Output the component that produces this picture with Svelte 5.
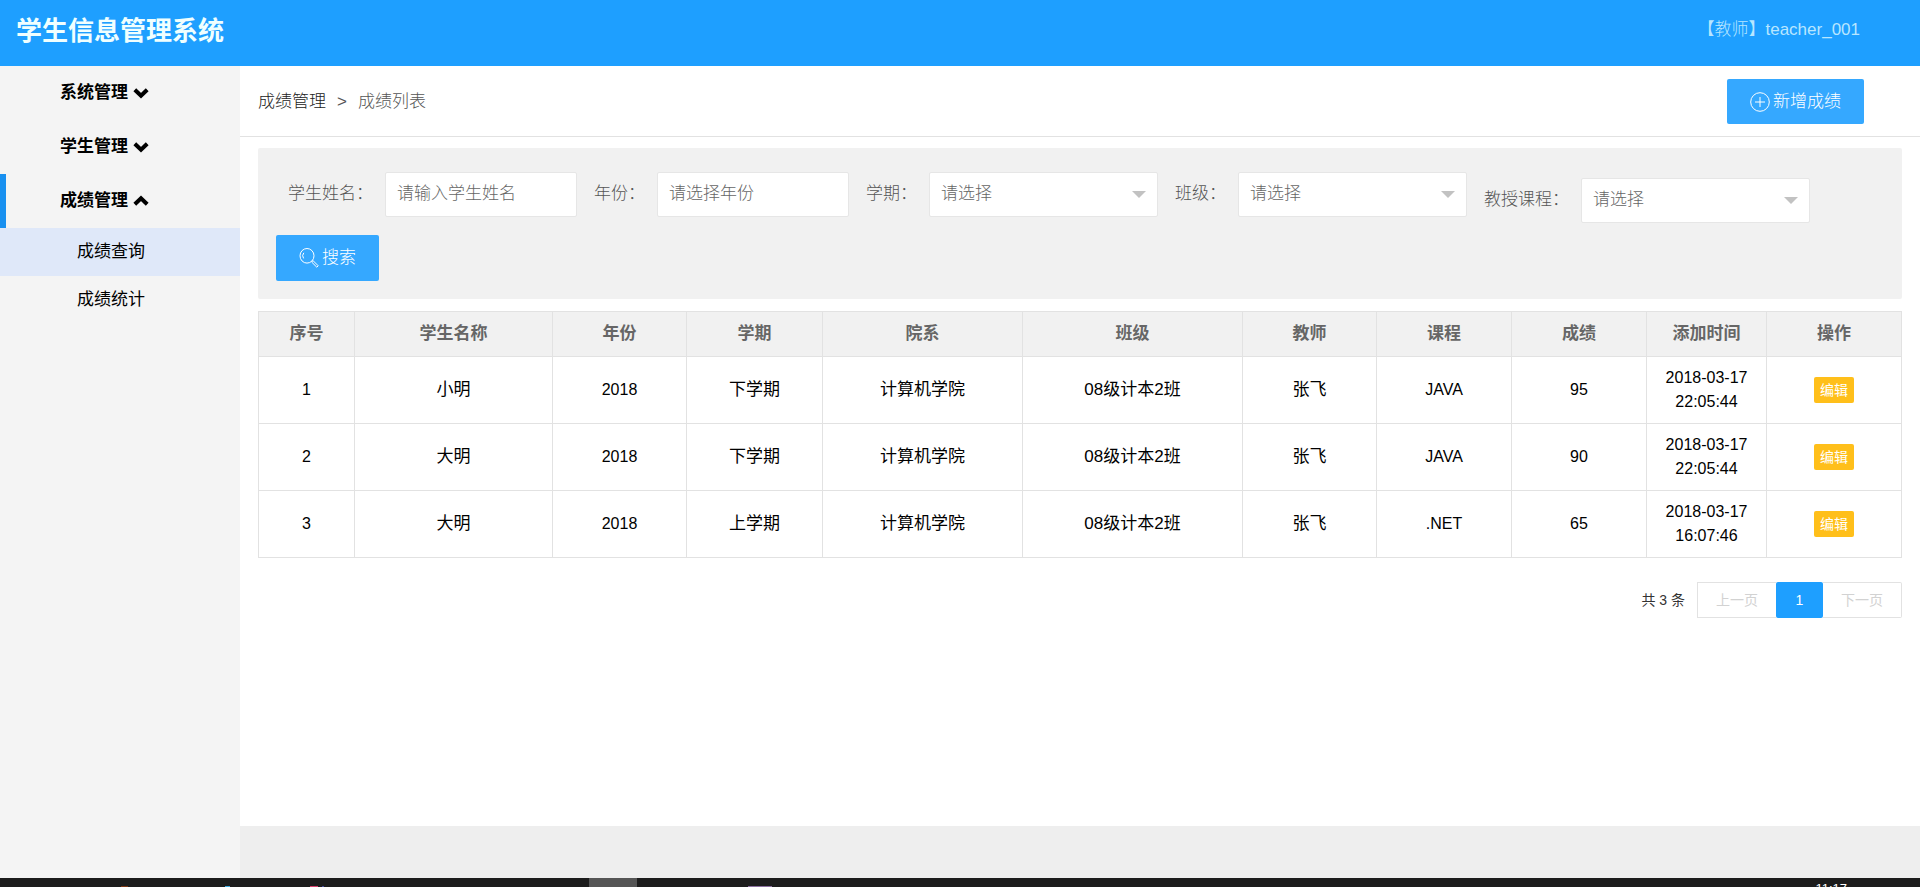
<script lang="ts">
	type Nota = {
		id: number;
		alumno: string;
		anio: string;
		semestre: string;
		facultad: string;
		clase: string;
		profesor: string;
		curso: string;
		puntaje: number;
		fecha: string;
		hora: string;
	}

	type Menu = {
		titulo: string;
		hijos: string[];
	}

	const menus: Menu[] = [
		{ titulo: "系统管理", hijos: [] },
		{ titulo: "学生管理", hijos: [] },
		{ titulo: "成绩管理", hijos: ["成绩查询", "成绩统计"] },
	];

	const columnas = [
		{ nombre: "序号", ancho: 96 },
		{ nombre: "学生名称", ancho: 198 },
		{ nombre: "年份", ancho: 134 },
		{ nombre: "学期", ancho: 136 },
		{ nombre: "院系", ancho: 200 },
		{ nombre: "班级", ancho: 220 },
		{ nombre: "教师", ancho: 134 },
		{ nombre: "课程", ancho: 135 },
		{ nombre: "成绩", ancho: 135 },
		{ nombre: "添加时间", ancho: 120 },
		{ nombre: "操作", ancho: 135 },
	];
	const anchoTotal = columnas.reduce((suma, c) => suma + c.ancho, 0);

	const notas: Nota[] = [
		{ id: 1, alumno: "小明", anio: "2018", semestre: "下学期", facultad: "计算机学院", clase: "08级计本2班", profesor: "张飞", curso: "JAVA", puntaje: 95, fecha: "2018-03-17", hora: "22:05:44" },
		{ id: 2, alumno: "大明", anio: "2018", semestre: "下学期", facultad: "计算机学院", clase: "08级计本2班", profesor: "张飞", curso: "JAVA", puntaje: 90, fecha: "2018-03-17", hora: "22:05:44" },
		{ id: 3, alumno: "大明", anio: "2018", semestre: "上学期", facultad: "计算机学院", clase: "08级计本2班", profesor: "张飞", curso: ".NET", puntaje: 65, fecha: "2018-03-17", hora: "16:07:46" },
	];

	let abierto = $state("成绩管理");
	let activo = $state("成绩查询");

	function alternar(titulo: string): void {
		abierto = abierto === titulo ? "" : titulo;
	}
</script>

<div class="pantalla">
	<header class="cabecera">
		<h1>学生信息管理系统</h1>
		<a href="#usuario" class="usuario">【教师】teacher_001</a>
	</header>

	<div class="cuerpo">
		<!-- MENU LATERAL -->
		<nav class="lateral">
			{#each menus as m (m.titulo)}
				<button class="menu" class:abierto={abierto === m.titulo} onclick={() => alternar(m.titulo)}>
					{m.titulo}
					<svg class="flecha" viewBox="0 0 16 12" aria-hidden="true">
						<path d="M1.8 2.8 L8 8.8 L14.2 2.8" />
					</svg>
				</button>
				{#if abierto === m.titulo}
					{#each m.hijos as h (h)}
						<a href="#{h}" class="submenu" class:activo={activo === h} onclick={() => (activo = h)}>{h}</a>
					{/each}
				{/if}
			{/each}
		</nav>

		<div class="principal">
			<div class="barra">
				<div class="ruta">
					<a href="#notas">成绩管理</a>
					<span>&gt;</span>
					<span>成绩列表</span>
				</div>
				<button class="btn btn-nuevo">
					<svg class="icono" viewBox="0 0 20 20" aria-hidden="true">
						<circle cx="10" cy="10" r="9.3" />
						<path d="M10 5v10M5 10h10" />
					</svg>
					新增成绩
				</button>
			</div>

			<div class="contenido">
				<!-- FILTROS -->
				<form class="filtros" onsubmit={(e) => e.preventDefault()}>
					<div class="campos">
						<div class="campo">
							<label for="alumno">学生姓名：</label>
							<input id="alumno" type="text" placeholder="请输入学生姓名" />
						</div>
						<div class="campo">
							<label for="anio">年份：</label>
							<input id="anio" type="text" placeholder="请选择年份" />
						</div>
						<div class="campo">
							<label for="semestre">学期：</label>
							<div class="selector">
								<select id="semestre"><option>请选择</option></select>
							</div>
						</div>
						<div class="campo">
							<label for="clase">班级：</label>
							<div class="selector">
								<select id="clase"><option>请选择</option></select>
							</div>
						</div>
						<div class="campo campo-curso">
							<label for="curso">教授课程：</label>
							<div class="selector">
								<select id="curso"><option>请选择</option></select>
							</div>
						</div>
					</div>
					<button class="btn btn-buscar">
						<svg class="icono" viewBox="0 0 20 20" aria-hidden="true">
							<ellipse cx="8" cy="7.8" rx="7" ry="7.3" />
							<path d="M4.6 10.4 A4.6 4.6 0 0 1 4.8 4.8" />
							<path d="M12.6 14 L14 12.6 L19.2 17.8 L17.8 19.2 Z" />
						</svg>
						搜索
					</button>
				</form>

				<!-- TABLA DE NOTAS -->
				<table>
					<colgroup>
						{#each columnas as c (c.nombre)}
							<col style="width: {(c.ancho / anchoTotal) * 100}%" />
						{/each}
					</colgroup>
					<thead>
						<tr>
							{#each columnas as c (c.nombre)}
								<th>{c.nombre}</th>
							{/each}
						</tr>
					</thead>
					<tbody>
						{#each notas as n (n.id)}
							<tr>
								<td class="latino">{n.id}</td>
								<td>{n.alumno}</td>
								<td class="latino">{n.anio}</td>
								<td>{n.semestre}</td>
								<td>{n.facultad}</td>
								<td>{n.clase}</td>
								<td>{n.profesor}</td>
								<td class="latino">{n.curso}</td>
								<td class="latino">{n.puntaje}</td>
								<td class="latino">{n.fecha}<br />{n.hora}</td>
								<td><button class="btn-editar">编辑</button></td>
							</tr>
						{/each}
					</tbody>
				</table>

				<!-- PAGINACION -->
				<div class="paginas">
					<span class="total">共 {notas.length} 条</span>
					<button class="pagina" disabled>上一页</button>
					<button class="pagina actual">1</button>
					<button class="pagina" disabled>下一页</button>
				</div>
			</div>

			<footer class="pie"></footer>
		</div>
	</div>

	<!-- BARRA DE TAREAS: solo asoma el borde superior -->
	<div class="tareas">
		<svg class="programas" viewBox="0 0 800 9" aria-hidden="true">
			<rect x="589" y="0" width="48" height="9" fill="#555" />
			<rect x="121" y="8" width="7" height="1" fill="#7a3412" />
			<rect x="225" y="8" width="5" height="1" fill="#3fa9dc" />
			<rect x="310" y="8" width="8" height="1" fill="#d8406c" />
			<rect x="322" y="8" width="2" height="1" fill="#44489a" />
			<rect x="748" y="8" width="24" height="1" fill="#8a6f9e" />
		</svg>
		<span class="reloj">11:17</span>
	</div>
</div>

<style>
	:global(body) {
		margin: 0;
	}

	.pantalla {
		display: flex;
		flex-direction: column;
		height: 100vh;
		overflow: hidden;
		background: #fff;
		color: #000;
		font-family: "Liberation Sans", "Noto Sans CJK SC", sans-serif;
		font-size: 17px;
		font-weight: 300;
		line-height: 24px;
	}

	button, input, select {
		font: inherit;
		box-sizing: border-box;
	}
	a {
		color: inherit;
		text-decoration: none;
	}

	/* 1. CABECERA */
	.cabecera {
		display: flex;
		flex: none;
		justify-content: space-between;
		align-items: center;
		height: 62px;
		padding: 0 60px 4px 16px;
		background: #1e9fff;
	}
	.cabecera h1 {
		margin: 0;
		color: #f0ffff;
		font-size: 26px;
		font-weight: bold;
		line-height: 36px;
	}
	.usuario {
		padding-bottom: 2px;
		color: #b8e6ff;
	}

	.cuerpo {
		display: flex;
		flex: 1;
		min-height: 0;
	}

	/* 2. MENU LATERAL */
	.lateral {
		flex: none;
		width: 240px;
		background: #f4f4f4;
	}
	.menu {
		display: flex;
		align-items: center;
		gap: 5px;
		width: 100%;
		height: 54px;
		padding: 0 0 0 54px;
		border: 0;
		border-left: 6px solid transparent;
		background: none;
		color: #000;
		font-weight: bold;
		cursor: pointer;
	}
	.menu.abierto {
		border-left-color: #1890f0;
	}
	.flecha {
		width: 16px;
		height: 12px;
		fill: none;
		stroke: #000;
		stroke-width: 4;
	}
	.abierto .flecha {
		transform: rotate(180deg);
	}
	.submenu {
		display: block;
		padding: 12px 0 12px 77px;
		font-weight: 400;
	}
	.submenu.activo {
		background: #dfe8f9;
	}

	/* 3. ZONA PRINCIPAL */
	.principal {
		display: flex;
		flex: 1;
		flex-direction: column;
		min-width: 0;
	}
	.barra {
		display: flex;
		justify-content: space-between;
		align-items: center;
		padding: 13px 56px 12px 18px;
		border-bottom: 1px solid #e2e2e2;
	}
	.ruta {
		display: flex;
		gap: 11px;
		color: #555;
	}
	.ruta a {
		color: #222;
	}
	.contenido {
		flex: 1;
		padding: 11px 18px 0;
	}

	.btn {
		display: flex;
		align-items: center;
		gap: 3px;
		height: 45px;
		padding: 0 23px;
		border: 0;
		border-radius: 2px;
		background: #35a8ff;
		color: #fff;
		white-space: nowrap;
		cursor: pointer;
	}
	.icono {
		width: 20px;
		height: 20px;
		fill: none;
		stroke: #fff;
		stroke-width: 1;
	}

	/* 4. FILTROS */
	.filtros {
		padding: 24px 18px 18px;
		border-radius: 2px;
		background: #f1f1f1;
	}
	.campos {
		display: flex;
		flex-wrap: wrap;
		gap: 17px;
		padding-left: 12px;
		margin-bottom: 12px;
	}
	.campo {
		display: flex;
		align-items: center;
		gap: 12px;
		height: 45px;
		color: #555;
	}
	.campo-curso {
		margin-top: 6px;
	}
	.campo label {
		white-space: nowrap;
		padding-bottom: 2px;
	}
	.campo input, .campo select {
		width: 192px;
		height: 45px;
		padding: 0 11px 2px;
		border: 1px solid #e6e6e6;
		border-radius: 2px;
		background: #fff;
		color: #666;
	}
	.campo input::placeholder {
		color: #666;
		opacity: 1;
	}
	.campo select {
		width: 229px;
		appearance: none;
	}
	.selector {
		position: relative;
	}
	.selector::after {
		content: "";
		position: absolute;
		right: 12px;
		top: 19px;
		border: 7px solid transparent;
		border-top-color: #c2c2c2;
		border-bottom: 0;
		pointer-events: none;
	}
	.btn-buscar {
		height: 46px;
	}

	/* 5. TABLA */
	table {
		width: 100%;
		margin-top: 12px;
		border-collapse: collapse;
		table-layout: fixed;
	}
	th, td {
		padding: 9px 0;
		border: 1px solid #e2e2e2;
		font-weight: 400;
		text-align: center;
	}
	th {
		padding: 10px 0;
		background: #f1f1f1;
		color: #666;
		font-weight: bold;
	}
	.latino {
		font-size: 16px;
	}
	.btn-editar {
		display: block;
		height: 26px;
		margin: 0 auto;
		padding: 0 6px;
		border: 0;
		border-radius: 2px;
		background: #ffbf1a;
		color: #fff;
		font-size: 14px;
		cursor: pointer;
	}

	/* 6. PAGINACION */
	.paginas {
		display: flex;
		justify-content: flex-end;
		align-items: center;
		margin-top: 24px;
		color: #333;
		font-size: 14px;
	}
	.total {
		margin-right: 12px;
		font-weight: 400;
	}
	.pagina {
		height: 36px;
		padding: 0 18px;
		border: 1px solid #e2e2e2;
		background: #fff;
		color: #d2d2d2;
		font-weight: 400;
	}
	.pagina:first-of-type {
		border-right: 0;
	}
	.pagina:last-of-type {
		border-left: 0;
		border-radius: 0 2px 2px 0;
	}
	.pagina.actual {
		width: 47px;
		border: 0;
		border-radius: 2px;
		background: #1e9fff;
		color: #fff;
	}

	.pie {
		height: 52px;
		background: #eee;
	}

	/* 7. BARRA DE TAREAS */
	.tareas {
		display: flex;
		flex: none;
		justify-content: space-between;
		height: 9px;
		padding-right: 73px;
		overflow: hidden;
		background: #1c1c1c;
	}
	.programas {
		flex: none;
		width: 800px;
		height: 9px;
	}
	.reloj {
		padding-top: 3px;
		color: #fff;
		font-size: 13px;
		line-height: 15px;
	}
</style>
